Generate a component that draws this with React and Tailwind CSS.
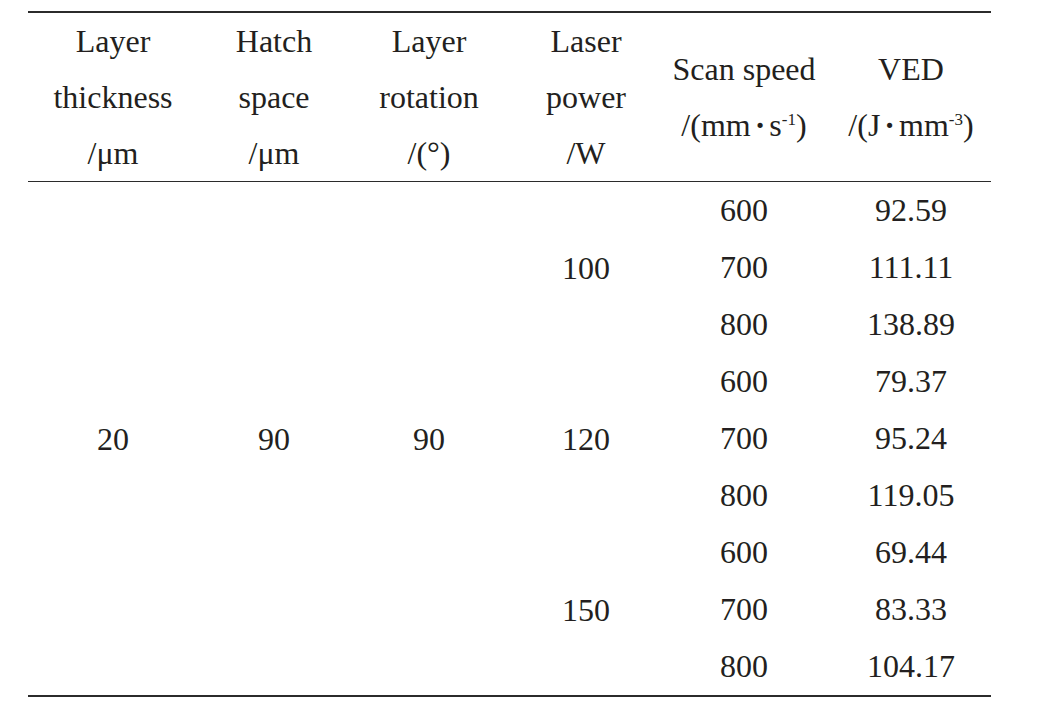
const rows = [
  { power: '100', speed: '600', ved: '92.59' },
  { speed: '700', ved: '111.11' },
  { speed: '800', ved: '138.89' },
  { power: '120', speed: '600', ved: '79.37' },
  { speed: '700', ved: '95.24' },
  { speed: '800', ved: '119.05' },
  { power: '150', speed: '600', ved: '69.44' },
  { speed: '700', ved: '83.33' },
  { speed: '800', ved: '104.17' },
];

export default function App() {
  return (
    <div className="min-h-screen bg-white pl-[28px] pt-[11px] text-[#231f20]" style={{ fontFamily: '"Liberation Serif", "Times New Roman", serif' }}>
      <table className="w-[963px] table-fixed border-collapse text-[32px]">
        <colgroup>
          <col className="w-[170px]" />
          <col className="w-[152px]" />
          <col className="w-[158px]" />
          <col className="w-[156px]" />
          <col className="w-[160px]" />
          <col className="w-[167px]" />
        </colgroup>
        <thead>
          <tr className="border-t-2 border-b-[1.5px] border-[#2b2b2b]">
            <th className="h-[168px] p-0 text-center align-middle font-normal leading-[56px]">Layer<br />thickness<br />/μm</th>
            <th className="p-0 text-center align-middle font-normal leading-[56px]">Hatch<br />space<br />/μm</th>
            <th className="p-0 text-center align-middle font-normal leading-[56px]">Layer<br />rotation<br />/(°)</th>
            <th className="p-0 text-center align-middle font-normal leading-[56px]">Laser<br />power<br />/W</th>
            <th className="p-0 text-center align-middle font-normal leading-[56px]">
              Scan speed<br />/(mm<span className="mx-[4px] font-bold">·</span>s<sup className="top-0 text-[17px] leading-none align-[11px]">-1</sup>)
            </th>
            <th className="p-0 pl-[7px] text-center align-middle font-normal leading-[56px]">
              VED<br />/(J<span className="mx-[4px] font-bold">·</span>mm<sup className="top-0 text-[17px] leading-none align-[11px]">-3</sup>)
            </th>
          </tr>
        </thead>
        <tbody className="border-b-2 border-[#2b2b2b]">
          {rows.map((r, i) => (
            <tr key={i}>
              {i === 0 && (
                <>
                  <td rowSpan={9} className="p-0 text-center align-middle">20</td>
                  <td rowSpan={9} className="p-0 text-center align-middle">90</td>
                  <td rowSpan={9} className="p-0 text-center align-middle">90</td>
                </>
              )}
              {r.power && <td rowSpan={3} className="p-0 text-center align-middle">{r.power}</td>}
              <td className="h-[57px] p-0 text-center align-middle leading-[57px]">{r.speed}</td>
              <td className="p-0 pl-[7px] text-center align-middle leading-[57px]">{r.ved}</td>
            </tr>
          ))}
        </tbody>
      </table>
    </div>
  );
}
